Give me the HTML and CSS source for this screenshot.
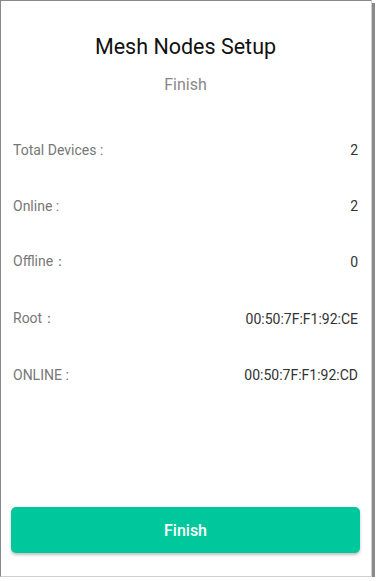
FILE: index.html
```html
<!DOCTYPE html>
<html lang="en">
<head>
    <meta charset="UTF-8">
    <title>Mesh Nodes Setup</title>
    <meta name="viewport" content="width=device-width, initial-scale=1.0">
    <link rel="stylesheet" href="styles.css">
</head>
<body>
    <div class="window">
        <h2 class="title">Mesh Nodes Setup</h2>
        <p class="subtitle">Finish</p>

        <div class="summary">
            <div class="row">
                <span class="label">Total Devices :</span>
                <span class="value">2</span>
            </div>
            <div class="row">
                <span class="label">Online :</span>
                <span class="value">2</span>
            </div>
            <div class="row">
                <span class="label">Offline：</span>
                <span class="value">0</span>
            </div>
            <div class="row">
                <span class="label">Root：</span>
                <span class="value">00:50:7F:F1:92:CE</span>
            </div>
            <div class="row">
                <span class="label">ONLINE :</span>
                <span class="value">00:50:7F:F1:92:CD</span>
            </div>
        </div>

        <button type="button" class="finish-btn">Finish</button>
    </div>
</body>
</html>
```

FILE: styles.css
```css
* {
    box-sizing: border-box;
}

body {
    font-family: Roboto, "Noto Sans", sans-serif;
    background-color: #fff;
    margin: 0;
    padding: 0;
}

.window {
    width: 372px;
    height: 577px;
    display: flex;
    flex-direction: column;
    background: #fff;
    border: 1px solid #8a8a8a;
    border-right-color: #d0d0d0;
    border-bottom-color: #d0d0d0;
    box-shadow: 3px 3px 0 #8a8a8a;
    padding: 0 13px 0 12px;
}

.title {
    margin: 34px 0 0;
    font-size: 21.5px;
    line-height: 24px;
    font-weight: 400;
    color: #111;
    text-align: center;
}

.subtitle {
    margin: 16px 0 0;
    font-size: 16px;
    line-height: 20px;
    color: #888;
    text-align: center;
}

.summary {
    margin-top: 27px;
}

.row {
    display: flex;
    justify-content: space-between;
    align-items: center;
    height: 56.2px;
    font-size: 14px;
}

.label {
    color: #777;
}

.value {
    color: #333;
}

.finish-btn {
    margin-top: auto;
    margin-bottom: 23px;
    margin-left: -2px;
    margin-right: -2px;
    height: 46px;
    font-family: inherit;
    font-size: 16px;
    font-weight: 500;
    color: #fff;
    background-color: #00c89c;
    border: none;
    border-radius: 5px;
    box-shadow: 0 2px 3px rgba(0, 0, 0, 0.25);
    cursor: pointer;
}
```
